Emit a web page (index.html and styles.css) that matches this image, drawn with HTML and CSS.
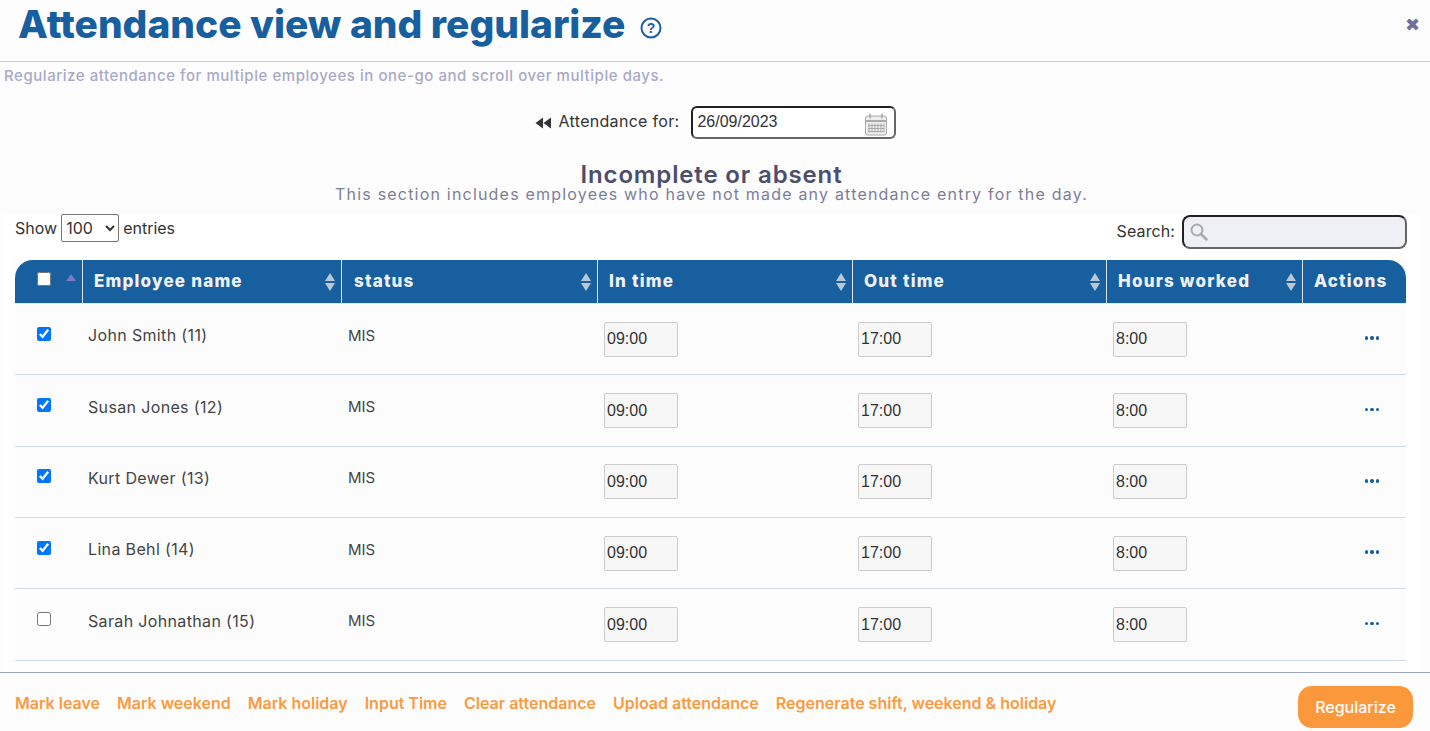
FILE: index.html
```html
<!DOCTYPE html>
<html lang="en">
<head>
    <meta charset="UTF-8">
    <meta name="viewport" content="width=device-width, initial-scale=1.0">
    <title>Attendance view and regularize</title>
    <link rel="stylesheet" href="styles.css">
</head>
<body>
    <header class="page-head">
        <h1>Attendance view and regularize</h1>
        <svg class="help-icon" width="22" height="22" viewBox="0 0 22 22">
            <circle cx="11" cy="11" r="9.5" fill="none" stroke="#175f9f" stroke-width="2"/>
            <text x="11" y="15.5" text-anchor="middle" class="help-mark">?</text>
        </svg>
        <span class="close">&#10006;</span>
    </header>
    <p class="subtitle">Regularize attendance for multiple employees in one-go and scroll over multiple days.</p>

    <div class="date-row">
        <svg width="16" height="12" viewBox="0 0 16 12">
            <path d="M8 0.500v11L0.500 6zM16 0.500v11L8.500 6z" fill="#333"/>
        </svg>
        <label for="attDate">Attendance for:</label>
        <div class="date-box">
            <input id="attDate" type="text" value="26/09/2023">
            <svg class="cal-icon" width="24" height="25" viewBox="0 0 24 24">
                <rect x="1.500" y="3.500" width="21" height="19" rx="2" fill="#eee" stroke="#aaa"/>
                <path d="M1.500 8.500h21" stroke="#aaa" stroke-width="2"/>
                <path d="M6 1v5M18 1v5" stroke="#aaa" stroke-width="1.500"/>
                <path d="M5 11v9M8 11v9M11 11v9M14 11v9M17 11v9M20 11v9M4 13h16M4 16h16M4 19h16" stroke="#aaa"/>
            </svg>
        </div>
    </div>

    <section class="section-head">
        <h2>Incomplete or absent</h2>
        <p>This section includes employees who have not made any attendance entry for the day.</p>
    </section>

    <main class="table-wrap">
        <div class="table-tools">
            <div class="length-ctrl">
                Show
                <select><option>100</option></select>
                entries
            </div>
            <div class="search-ctrl">
                <label for="search">Search:</label>
                <div class="search-box">
                    <svg width="20" height="20" viewBox="0 0 20 20">
                        <circle cx="8" cy="8" r="5.500" fill="none" stroke="#aaa" stroke-width="2"/>
                        <path d="M12 12l5.500 5.500" stroke="#aaa" stroke-width="2.500" stroke-linecap="round"/>
                    </svg>
                    <input id="search" type="text">
                </div>
            </div>
        </div>

        <table class="att-table">
            <colgroup>
                <col class="col-check"><col class="col-name"><col class="col-status">
                <col class="col-in"><col class="col-out"><col class="col-hours"><col class="col-actions">
            </colgroup>
            <thead>
                <tr>
                    <th class="check-head">
                        <input type="checkbox">
                        <svg class="sort-up" width="10" height="7" viewBox="0 0 10 7"><path d="M5 0l5 7H0z" fill="#7a78c8"/></svg>
                    </th>
                    <th>Employee name <svg class="sort" width="10" height="18" viewBox="0 0 10 18"><path d="M5 0l5 8H0zM5 18l5-8H0z" fill="#b9c7d6"/></svg></th>
                    <th class="th-status">status <svg class="sort" width="10" height="18" viewBox="0 0 10 18"><path d="M5 0l5 8H0zM5 18l5-8H0z" fill="#b9c7d6"/></svg></th>
                    <th>In time <svg class="sort" width="10" height="18" viewBox="0 0 10 18"><path d="M5 0l5 8H0zM5 18l5-8H0z" fill="#b9c7d6"/></svg></th>
                    <th>Out time <svg class="sort" width="10" height="18" viewBox="0 0 10 18"><path d="M5 0l5 8H0zM5 18l5-8H0z" fill="#b9c7d6"/></svg></th>
                    <th>Hours worked <svg class="sort" width="10" height="18" viewBox="0 0 10 18"><path d="M5 0l5 8H0zM5 18l5-8H0z" fill="#b9c7d6"/></svg></th>
                    <th>Actions</th>
                </tr>
            </thead>
            <tbody id="rows"></tbody>
        </table>
    </main>

    <footer class="page-foot">
        <nav class="foot-links">
            <a href="#">Mark leave</a>
            <a href="#">Mark weekend</a>
            <a href="#">Mark holiday</a>
            <a href="#">Input Time</a>
            <a href="#">Clear attendance</a>
            <a href="#">Upload attendance</a>
            <a href="#">Regenerate shift, weekend &amp; holiday</a>
        </nav>
        <button class="regularize">Regularize</button>
    </footer>

    <script>
        const employees = [
            { name: "John Smith (11)", checked: true },
            { name: "Susan Jones (12)", checked: true },
            { name: "Kurt Dewer (13)", checked: true },
            { name: "Lina Behl (14)", checked: true },
            { name: "Sarah Johnathan (15)", checked: false },
        ];

        const rows = document.getElementById("rows");
        employees.forEach(emp => {
            const tr = document.createElement("tr");
            tr.innerHTML = `
                <td class="check-cell"><input type="checkbox" ${emp.checked ? "checked" : ""}></td>
                <td class="name-cell">${emp.name}</td>
                <td class="status-cell">MIS</td>
                <td class="time-cell"><input class="time-input" type="text" value="09:00"></td>
                <td><input class="time-input" type="text" value="17:00"></td>
                <td class="time-cell"><input class="time-input" type="text" value="8:00"></td>
                <td class="actions-cell"><span class="dots"><i></i><i></i><i></i></span></td>
            `;
            rows.appendChild(tr);
        });
    </script>
</body>
</html>
```

FILE: styles.css
```css
html, body {
    height: 731px;
    overflow: hidden;
}

body {
    margin: 0;
    background-color: #fdfdfd;
    font-family: Inter, "Open Sans", sans-serif;
    color: #333;
    font-size: 16px;
}

.page-head {
    display: flex;
    align-items: center;
    height: 61px;
    padding-left: 18px;
    padding-right: 10px;
    border-bottom: 1px solid #ccc;
    box-sizing: content-box;
}

.page-head h1 {
    margin: 0 15px 0 0;
    font-size: 38.900px;
    font-weight: 800;
    color: #175f9f;
    line-height: 48px;
    position: relative;
    top: -7px;
}

.help-icon {
    position: relative;
    top: -3px;
}

.help-mark {
    font-family: "Liberation Sans", sans-serif;
    font-size: 14px;
    font-weight: 700;
    fill: #175f9f;
}

.close {
    margin-left: auto;
    margin-top: -12px;
    color: #6f6f9c;
    font-size: 18px;
    font-family: "DejaVu Sans", sans-serif;
}

.subtitle {
    margin: 4px 0 0 4px;
    font-size: 15px;
    font-weight: 500;
    line-height: 20px;
    letter-spacing: 0.55px;
    color: #a9a9c6;
}

.date-row {
    display: flex;
    justify-content: center;
    align-items: center;
    gap: 8px;
    margin-top: 20px;
    padding-left: 1px;
    height: 33px;
}

.date-row label {
    margin-right: 4px;
    margin-top: -3px;
    letter-spacing: 0.3px;
}

.date-box {
    display: flex;
    align-items: center;
    width: 205px;
    height: 33px;
    box-sizing: border-box;
    border: 2px solid;
    border-color: #222 #666 #666 #222;
    border-radius: 6px;
    background-color: #fff;
    padding: 0 6px 0 4px;
}

.date-box input {
    flex: 1;
    min-width: 0;
    border: 0;
    padding: 0;
    margin-top: -2px;
    outline: none;
    background: none;
    font-family: "Liberation Sans", sans-serif;
    font-size: 16px;
    color: #333;
}

.cal-icon {
    margin-top: 4px;
}

.section-head {
    margin-top: 23px;
    padding-right: 7px;
    text-align: center;
}

.section-head h2 {
    margin: 0;
    font-size: 24px;
    font-weight: 600;
    line-height: 26px;
    color: #4d4d6d;
    letter-spacing: 0.85px;
}

.section-head p {
    margin: -4px 0 0;
    font-size: 16px;
    line-height: 20px;
    color: #7d7d99;
    letter-spacing: 1.2px;
}

.table-wrap {
    margin: 10px 11px 0 2px;
    padding: 0 0 0 13px;
    height: 458px;
    overflow: hidden;
    background-color: #fff;
    box-sizing: border-box;
}

.table-tools {
    display: flex;
    justify-content: space-between;
    height: 46px;
    width: 1392px;
}

.length-ctrl {
    display: flex;
    align-items: center;
    align-self: flex-start;
    gap: 4px;
    height: 28px;
}

.length-ctrl select {
    width: 58px;
    height: 28px;
    font-family: Inter, sans-serif;
    font-size: 16px;
    color: #333;
    background-color: #fff;
    border: 1px solid #777;
    border-radius: 2px;
}

.search-ctrl {
    display: flex;
    align-items: center;
    align-self: flex-start;
    gap: 7px;
    height: 34px;
    margin-top: 1px;
}

.search-ctrl label {
    margin-top: -2px;
    letter-spacing: 0.1px;
}

.search-box {
    display: flex;
    align-items: center;
    width: 225px;
    height: 34px;
    box-sizing: border-box;
    padding-left: 5px;
    border: 2px solid;
    border-color: #222 #666 #666 #222;
    border-radius: 8px;
    background-color: #eff0f5;
}

.search-box input {
    flex: 1;
    min-width: 0;
    border: 0;
    outline: none;
    background: none;
}

.att-table {
    table-layout: fixed;
    width: 1391px;
    border-collapse: separate;
    border-spacing: 0;
    background-color: #fcfcfc;
}

.col-check { width: 67px; }
.col-name { width: 259px; }
.col-status { width: 256px; }
.col-in { width: 255px; }
.col-out { width: 254px; }
.col-hours { width: 196px; }
.col-actions { width: 104px; }

.att-table th {
    position: relative;
    height: 44px;
    padding: 0 0 2px 11px;
    box-sizing: border-box;
    background-color: #175f9f;
    color: #eef2f8;
    font-size: 17px;
    font-weight: 800;
    letter-spacing: 1.2px;
    text-align: left;
    border-left: 1px solid #dfe6ee;
    border-bottom: 1px solid #e4e6ea;
}

.att-table th:first-child {
    border-left: 0;
    border-top-left-radius: 18px;
}

.att-table th:last-child {
    border-top-right-radius: 18px;
}

.att-table th.th-status {
    padding-left: 12px;
}

.sort {
    position: absolute;
    right: 6px;
    top: 13px;
}

.sort-up {
    position: absolute;
    left: 51px;
    top: 14px;
}

.check-head input {
    position: absolute;
    left: 22px;
    top: 12px;
    margin: 0;
    width: 14px;
    height: 14px;
}

.att-table td {
    height: 71.350px;
    padding: 0 0 0 6px;
    box-sizing: border-box;
    font-size: 16px;
    color: #444;
    border-bottom: 1px solid #cfdbea;
}

.att-table td.check-cell {
    padding-left: 22px;
    padding-bottom: 11px;
}

.check-cell input {
    display: block;
    margin: 0;
    width: 14px;
    height: 14px;
}

.att-table td.name-cell {
    padding-bottom: 8px;
    letter-spacing: 0.35px;
}

.att-table td.status-cell {
    padding-left: 7px;
    padding-bottom: 8px;
    font-size: 15px;
}

.att-table td.time-cell {
    padding-left: 7px;
}

.time-input {
    display: block;
    width: 74px;
    height: 35px;
    box-sizing: border-box;
    padding: 1px 2px;
    border: 1px solid #ccc;
    border-radius: 2px;
    background-color: #f7f7f7;
    font-family: "Liberation Sans", sans-serif;
    font-size: 16px;
    color: #333;
}

.att-table td.actions-cell {
    padding: 0 0 2px 36px;
}

.dots {
    display: flex;
    justify-content: center;
    gap: 2px;
}

.dots i {
    display: block;
    width: 3.500px;
    height: 3.500px;
    border-radius: 50%;
    background-color: #175f9f;
}

.page-foot {
    display: flex;
    align-items: center;
    justify-content: space-between;
    height: 58px;
    padding: 0 17px 0 15px;
    border-top: 1px solid #9aa3c8;
    background-color: #fdfdfd;
}

.foot-links {
    display: flex;
    gap: 17px;
    margin-top: 1px;
}

.foot-links a {
    color: #fb9a3f;
    font-size: 16px;
    font-weight: 600;
    text-decoration: none;
}

.regularize {
    width: 115px;
    height: 42px;
    margin-top: 10px;
    border: none;
    border-radius: 14px;
    background-color: #fb983c;
    color: #fff;
    font-family: Inter, sans-serif;
    font-size: 16px;
    font-weight: 500;
    cursor: pointer;
}
```
